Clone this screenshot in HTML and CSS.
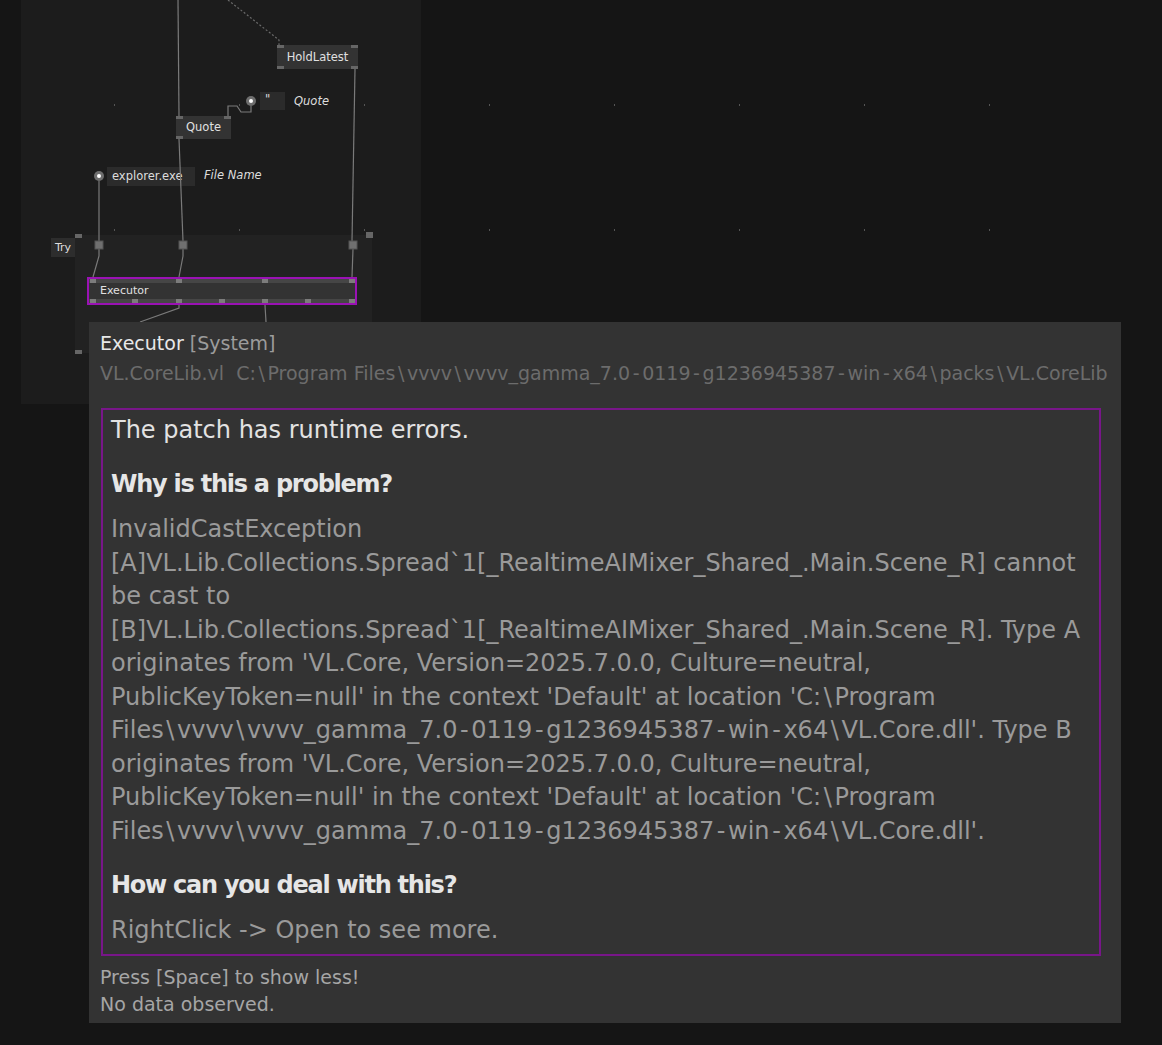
FILE: index.html
```html
<!DOCTYPE html>
<html lang="en">
<head>
<meta charset="UTF-8">
<title>Executor - runtime errors</title>
<link rel="stylesheet" href="styles.css">
</head>
<body>

<div class="canvas">
  <!-- patch background + Try region -->
  <div class="patch"></div>
  <div class="region"></div>
  <div class="region-label">Try</div>

  <!-- nodes -->
  <div class="node node-hold">HoldLatest</div>
  <div class="node node-quote">Quote</div>
  <div class="iobox iobox-quote">"</div>
  <div class="pin-label label-quote">Quote</div>
  <div class="iobox iobox-file">explorer.exe</div>
  <div class="pin-label label-file">File Name</div>
  <div class="node node-exec">Executor</div>

  <!-- wires, pins, grid -->
  <svg class="wires" width="1162" height="420" viewBox="0 0 1162 420">
    <g class="grid">
      <rect x="114" y="104" width="1" height="2"/><rect x="239" y="104" width="1" height="2"/><rect x="364" y="104" width="1" height="2"/>
      <rect x="489" y="104" width="1" height="2"/><rect x="614" y="104" width="1" height="2"/><rect x="739" y="104" width="1" height="2"/>
      <rect x="864" y="104" width="1" height="2"/><rect x="989" y="104" width="1" height="2"/>
      <rect x="114" y="229" width="1" height="2"/><rect x="239" y="229" width="1" height="2"/><rect x="364" y="229" width="1" height="2"/>
      <rect x="489" y="229" width="1" height="2"/><rect x="614" y="229" width="1" height="2"/><rect x="739" y="229" width="1" height="2"/>
      <rect x="864" y="229" width="1" height="2"/><rect x="989" y="229" width="1" height="2"/>
    </g>
    <g class="links">
      <path class="dashed" d="M228 0 L279 40 V45"/>
      <path d="M178 0 L179 116"/>
      <path d="M228 116 V106 H237 L241 112 H251 V106"/>
      <path d="M179 139 L183 241"/>
      <path d="M99 181 V241"/>
      <path d="M355 69 L352 241"/>
      <path d="M99 249 V256 L93 277"/>
      <path d="M183 249 V256 L179 277"/>
      <path d="M353 249 L352 277"/>
      <path d="M179 305 V308 L140 322"/>
      <path d="M265 305 L266 322"/>
    </g>
    <g class="pins">
      <rect x="277" y="45" width="7" height="3"/><rect x="351" y="45" width="7" height="3"/>
      <rect x="277" y="66" width="7" height="3"/><rect x="351" y="66" width="7" height="3"/>
      <rect x="176" y="116" width="7" height="3"/><rect x="224" y="116" width="7" height="3"/>
      <rect x="176" y="136" width="7" height="3"/>
      <rect x="75" y="234" width="7" height="4"/><rect x="75" y="350" width="7" height="4"/>
      <rect x="366" y="232" width="7" height="6"/>
      <rect class="region-pin" x="95" y="241" width="8" height="8"/>
      <rect class="region-pin" x="179" y="241" width="8" height="8"/>
      <rect class="region-pin" x="349" y="241" width="8" height="8"/>
    </g>
    <g class="exec-strips">
      <rect x="89" y="279" width="266" height="4"/>
      <rect x="89" y="299" width="266" height="4"/>
    </g>
    <g class="exec-pins">
      <rect x="90" y="279" width="6" height="4"/><rect x="176" y="279" width="6" height="4"/>
      <rect x="262" y="279" width="6" height="4"/><rect x="349" y="279" width="6" height="4"/>
      <rect x="90" y="299" width="6" height="4"/><rect x="132" y="299" width="6" height="4"/>
      <rect x="176" y="299" width="6" height="4"/><rect x="219" y="299" width="6" height="4"/>
      <rect x="262" y="299" width="6" height="4"/><rect x="305" y="299" width="6" height="4"/>
      <rect x="349" y="299" width="6" height="4"/>
    </g>
    <g class="io-pins">
      <circle cx="251" cy="101" r="5"/><circle class="dot" cx="251" cy="101" r="2"/>
      <circle cx="99" cy="176" r="5"/><circle class="dot" cx="99" cy="176" r="2"/>
    </g>
  </svg>

  <!-- tooltip -->
  <div class="tooltip">
    <div class="tip-title">Executor <span class="category">[System]</span></div>
    <div class="tip-path">VL.CoreLib.vl  C:<span class="sep">\</span>Program Files<span class="sep">\</span>vvvv<span class="sep">\</span>vvvv_gamma_7.0<span class="sep">-</span>0119<span class="sep">-</span>g1236945387<span class="sep">-</span>win<span class="sep">-</span>x64<span class="sep">\</span>packs<span class="sep">\</span>VL.CoreLib</div>

    <div class="message">
      <p class="lead">The patch has runtime errors.</p>
      <h4>Why is this a problem?</h4>
      <p class="details">InvalidCastException<br>[A]VL.Lib.Collections.Spread`1[_RealtimeAIMixer_Shared_.Main.Scene_R] cannot<br>be cast to<br>[B]VL.Lib.Collections.Spread`1[_RealtimeAIMixer_Shared_.Main.Scene_R]. Type A<br>originates from 'VL.Core, Version=2025.7.0.0, Culture=neutral,<br>PublicKeyToken=null' in the context 'Default' at location 'C:<span class="sep">\</span>Program<br>Files<span class="sep">\</span>vvvv<span class="sep">\</span>vvvv_gamma_7.0<span class="sep">-</span>0119<span class="sep">-</span>g1236945387<span class="sep">-</span>win<span class="sep">-</span>x64<span class="sep">\</span>VL.Core.dll'. Type B<br>originates from 'VL.Core, Version=2025.7.0.0, Culture=neutral,<br>PublicKeyToken=null' in the context 'Default' at location 'C:<span class="sep">\</span>Program<br>Files<span class="sep">\</span>vvvv<span class="sep">\</span>vvvv_gamma_7.0<span class="sep">-</span>0119<span class="sep">-</span>g1236945387<span class="sep">-</span>win<span class="sep">-</span>x64<span class="sep">\</span>VL.Core.dll'.</p>
      <h4>How can you deal with this?</h4>
      <p class="details last">RightClick -&gt; Open to see more.</p>
    </div>

    <div class="tip-footer">
      <div>Press [Space] to show less!</div>
      <div>No data observed.</div>
    </div>
  </div>
</div>

</body>
</html>
```

FILE: styles.css
```css
body {
  margin: 0;
  background-color: #151515;
  font-family: 'DejaVu Sans', 'Liberation Sans', sans-serif;
  overflow: hidden;
}
.canvas {
  position: relative;
  width: 1162px;
  height: 1045px;
}

/* patch canvas */
.patch {
  position: absolute;
  left: 21px;
  top: 0;
  width: 400px;
  height: 404px;
  background-color: #1c1c1c;
}
.region {
  position: absolute;
  left: 75px;
  top: 235px;
  width: 297px;
  height: 118px;
  background-color: #222;
}
.region-label {
  position: absolute;
  left: 51px;
  top: 238px;
  width: 24px;
  height: 19px;
  background-color: #2d2d2d;
  color: #ddd;
  font-size: 11px;
  line-height: 19px;
  text-align: center;
}
.wires {
  position: absolute;
  left: 0;
  top: 0;
}
.grid rect {
  fill: #555;
}
.links path {
  fill: none;
  stroke: #7a7a7a;
  stroke-width: 1.2;
}
.links .dashed {
  stroke-dasharray: 2 2;
  stroke: #6a6a6a;
}
.pins rect {
  fill: #666;
}
.pins .region-pin {
  fill: #707070;
  stroke: #555;
  stroke-width: 1;
}
.exec-strips rect {
  fill: #464646;
}
.exec-pins rect {
  fill: #7c7c7c;
}
.io-pins circle {
  fill: #6e6e6e;
}
.io-pins .dot {
  fill: #fff;
}

.node {
  position: absolute;
  background-color: #333;
  color: #e0e0e0;
  font-size: 11.5px;
  text-align: center;
}
.node-hold {
  left: 277px;
  top: 45px;
  width: 81px;
  height: 24px;
  line-height: 24px;
}
.node-quote {
  left: 176px;
  top: 116px;
  width: 55px;
  height: 23px;
  line-height: 22px;
}
.node-exec {
  left: 87px;
  top: 277px;
  width: 255px;
  height: 24px;
  border: 2px solid #9a12b4;
  font-size: 11px;
  line-height: 24px;
  text-align: left;
  padding-left: 11px;
}
.iobox {
  position: absolute;
  background-color: #2b2b2b;
  color: #ddd;
  font-size: 11.5px;
}
.iobox-quote {
  left: 260px;
  top: 92px;
  width: 25px;
  height: 18px;
  line-height: 14px;
  padding-left: 5px;
  box-sizing: border-box;
}
.iobox-file {
  left: 107px;
  top: 167px;
  width: 88px;
  height: 19px;
  line-height: 19px;
  padding-left: 5px;
  box-sizing: border-box;
}
.pin-label {
  position: absolute;
  color: #ddd;
  font-size: 11.5px;
  font-style: italic;
}
.label-quote {
  left: 294px;
  top: 94px;
}
.label-file {
  left: 204px;
  top: 168px;
}

/* tooltip */
.tooltip {
  position: absolute;
  left: 89px;
  top: 322px;
  width: 1032px;
  height: 701px;
  box-sizing: border-box;
  padding: 6px 11px 0 11px;
  background-color: #333;
}
.tip-title {
  font-size: 19px;
  line-height: 30px;
  color: #e8e8e8;
}
.tip-title .category {
  color: #9c9c9c;
}
.tip-path {
  font-size: 19px;
  line-height: 30px;
  color: #6c6c6c;
  white-space: pre;
}
.sep {
  margin: 0 2.6px;
}
.message {
  margin: 20px 9px 0 1px;
  padding: 4px 8px 7px 8px;
  border: 2px solid #781689;
  font-size: 24px;
  line-height: 33.5px;
}
.message p, .message h4 {
  margin: 0;
  white-space: nowrap;
}
.message .lead {
  color: #e2e2e2;
  margin-bottom: 20.5px;
}
.message h4 {
  color: #e6e6e6;
  font-size: 24px;
  font-weight: bold;
  letter-spacing: -1.25px;
  margin-bottom: 11.5px;
}
.message .details {
  color: #9a9a9a;
  margin-bottom: 20.5px;
}
.message .last {
  margin-bottom: 0;
}
.tip-footer {
  margin-top: 8px;
  font-size: 19px;
  line-height: 27px;
  color: #a6a6a6;
}
```
